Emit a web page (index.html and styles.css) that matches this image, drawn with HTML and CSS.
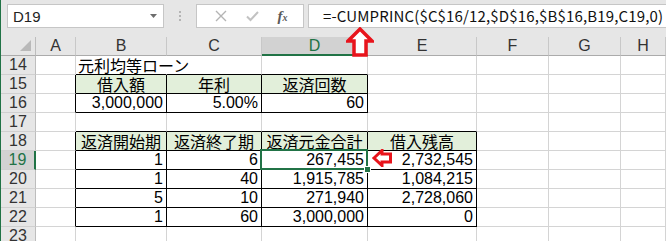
FILE: index.html
```html
<!DOCTYPE html>
<html lang="ja">

<head>
  <meta charset="utf-8">
  <link rel="stylesheet" href="styles.css">
</head>

<body>
  <div class="app">
    <div class="fbar">
      <div class="nameBox">
        <span>D19</span>
        <svg class="drop" width="7" height="4" viewBox="0 0 7 4"><path d="M0 0H7L3.5 4Z" fill="#6d6d6d"/></svg>
      </div>
      <div class="grip"><i></i><i></i><i></i></div>
      <div class="fBtns">
        <svg width="12" height="12" viewBox="0 0 12 12"><path d="M1 1L11 11M11 1L1 11" stroke="#b4b4b4" stroke-width="1.4" fill="none"/></svg>
        <svg width="13" height="12" viewBox="0 0 13 12"><path d="M1 6.5L4.5 10L12 2" stroke="#c2c2c2" stroke-width="2" fill="none"/></svg>
        <span class="fx">f<small>x</small></span>
      </div>
      <div class="formula">=-CUMPRINC($C$16/12,$D$16,$B$16,B19,C19,0)</div>
    </div>

    <div class="sheet">
      <div class="corner"><svg width="11" height="11" viewBox="0 0 11 11"><path d="M11 0V11H0Z" fill="#b9b9b9"/></svg></div>
      <div class="ch">A</div>
      <div class="ch">B</div>
      <div class="ch">C</div>
      <div class="ch on">D</div>
      <div class="ch">E</div>
      <div class="ch">F</div>
      <div class="ch">G</div>
      <div class="ch">H</div>

      <div class="rh">14</div>
      <div class="c"></div>
      <div class="c bb ovf">元利均等ローン</div>
      <div class="c bb"></div>
      <div class="c bb"></div>
      <div class="c"></div>
      <div class="c"></div>
      <div class="c"></div>
      <div class="c"></div>

      <div class="rh">15</div>
      <div class="c bl"></div>
      <div class="c hd">借入額</div>
      <div class="c hd">年利</div>
      <div class="c hd">返済回数</div>
      <div class="c"></div>
      <div class="c"></div>
      <div class="c"></div>
      <div class="c"></div>

      <div class="rh">16</div>
      <div class="c bl"></div>
      <div class="c bx num">3,000,000</div>
      <div class="c bx num">5.00%</div>
      <div class="c bx num">60</div>
      <div class="c"></div>
      <div class="c"></div>
      <div class="c"></div>
      <div class="c"></div>

      <div class="rh">17</div>
      <div class="c"></div>
      <div class="c bb"></div>
      <div class="c bb"></div>
      <div class="c bb"></div>
      <div class="c bb"></div>
      <div class="c"></div>
      <div class="c"></div>
      <div class="c"></div>

      <div class="rh">18</div>
      <div class="c bl"></div>
      <div class="c hd">返済開始期</div>
      <div class="c hd">返済終了期</div>
      <div class="c hd">返済元金合計</div>
      <div class="c hd">借入残高</div>
      <div class="c"></div>
      <div class="c"></div>
      <div class="c"></div>

      <div class="rh on">19</div>
      <div class="c bl"></div>
      <div class="c bx num">1</div>
      <div class="c bx num">6</div>
      <div class="c bx num active">267,455</div>
      <div class="c bx num">2,732,545</div>
      <div class="c"></div>
      <div class="c"></div>
      <div class="c"></div>

      <div class="rh">20</div>
      <div class="c bl"></div>
      <div class="c bx num">1</div>
      <div class="c bx num">40</div>
      <div class="c bx num">1,915,785</div>
      <div class="c bx num">1,084,215</div>
      <div class="c"></div>
      <div class="c"></div>
      <div class="c"></div>

      <div class="rh">21</div>
      <div class="c bl"></div>
      <div class="c bx num">5</div>
      <div class="c bx num">10</div>
      <div class="c bx num">271,940</div>
      <div class="c bx num">2,728,060</div>
      <div class="c"></div>
      <div class="c"></div>
      <div class="c"></div>

      <div class="rh">22</div>
      <div class="c bl"></div>
      <div class="c bx num">1</div>
      <div class="c bx num">60</div>
      <div class="c bx num">3,000,000</div>
      <div class="c bx num">0</div>
      <div class="c"></div>
      <div class="c"></div>
      <div class="c"></div>

      <div class="rh">23</div>
      <div class="c"></div>
      <div class="c"></div>
      <div class="c"></div>
      <div class="c"></div>
      <div class="c"></div>
      <div class="c"></div>
      <div class="c"></div>
      <div class="c"></div>
    </div>

    <!-- callout arrows drawn over the sheet -->
    <svg class="arrow upArrow" width="28" height="30" viewBox="0 0 28 30">
      <path d="M14 2L26 14H20V28H8V14H2Z" fill="#fff" stroke="#e8141c" stroke-width="3.5" stroke-linejoin="miter"/>
    </svg>
    <svg class="arrow leftArrow" width="20" height="18" viewBox="0 0 20 18">
      <path d="M2 9L10 1.5V5H18.5V13H10V16.5Z" fill="#fff" stroke="#e8141c" stroke-width="3" stroke-linejoin="miter"/>
    </svg>
  </div>
</body>

</html>
```

FILE: styles.css
```css
body {
  margin: 0;
  padding: 0;
  background: #fff;
  font-family: "Noto Sans CJK JP", "Noto Sans", sans-serif;
  overflow: hidden;
}

.app {
  position: relative;
  width: 666px;
  height: 241px;
  border-left: 1px solid #217346;
  box-sizing: border-box;
  overflow: hidden;
}

/* formula bar */
.fbar {
  display: flex;
  align-items: flex-start;
  height: 37px;
  padding: 4px 0 0 6px;
  box-sizing: border-box;
  background: #e6e6e6;
}

.nameBox {
  display: flex;
  flex-shrink: 0;
  align-items: center;
  justify-content: space-between;
  width: 157px;
  height: 24px;
  padding: 0 6px 0 5px;
  box-sizing: border-box;
  background: #fff;
  border: 1px solid #c6c6c6;
  font-family: "Liberation Sans", sans-serif;
  font-size: 15px;
  color: #222;
}

.grip {
  display: flex;
  flex-shrink: 0;
  flex-direction: column;
  align-items: center;
  gap: 2px;
  width: 32px;
  padding-top: 7px;
}

.grip i {
  width: 2px;
  height: 2px;
  background: #b4b4b4;
}

.fBtns {
  display: flex;
  flex-shrink: 0;
  align-items: center;
  justify-content: space-around;
  width: 108px;
  height: 24px;
  padding: 0 6px 0 8px;
  box-sizing: border-box;
  background: #fff;
  border: 1px solid #c6c6c6;
}

.fx {
  font-family: "Liberation Serif", serif;
  font-style: italic;
  font-weight: bold;
  font-size: 15px;
  color: #5a5a5a;
}

.fx small {
  font-size: 10px;
}

.formula {
  flex: 1;
  min-width: 0;
  height: 24px;
  margin: 0 -4px 0 4px;
  padding-left: 14px;
  box-sizing: border-box;
  background: #fff;
  border: 1px solid #c6c6c6;
  font-size: 15px;
  letter-spacing: 0.15px;
  line-height: 22px;
  color: #111;
  white-space: nowrap;
}

/* sheet grid */
.sheet {
  display: grid;
  grid-template-columns: 35px 40px 91px 95px 106px 109px 72px 72px 45px;
  grid-auto-rows: 19px;
  font-size: 16px;
  line-height: 18px;
}

.corner {
  display: flex;
  align-items: flex-end;
  justify-content: flex-end;
  padding: 0 4px 4px 0;
  background: #e6e6e6;
  border-right: 1px solid #bdbdbd;
  border-bottom: 1px solid #ababab;
}

.ch,
.rh,
.num {
  font-family: "Liberation Sans", sans-serif;
  font-size: 16px;
}

.ch {
  text-align: center;
  background: #e6e6e6;
  color: #333;
  border-right: 1px solid #c8c8c8;
  border-bottom: 1px solid #ababab;
  box-sizing: border-box;
}

.ch.on {
  background: #d2d2d2;
  color: #217346;
  border-bottom: 2px solid #217346;
}

.rh {
  text-align: center;
  background: #e6e6e6;
  color: #333;
  border-right: 1px solid #bdbdbd;
  border-bottom: 1px solid #d0d0d0;
  box-sizing: border-box;
}

.rh.on {
  background: #d2d2d2;
  color: #217346;
  border-right: 2px solid #217346;
}

.c {
  padding: 0 3px;
  border-right: 1px solid #d4d4d4;
  border-bottom: 1px solid #d4d4d4;
  box-sizing: border-box;
  white-space: nowrap;
  color: #000;
}

.ovf {
  overflow: visible;
  border-right-color: transparent;
  padding-left: 2px;
}

.bl {
  border-right-color: #000;
}

.bb {
  border-bottom-color: #000;
}

.bx,
.hd {
  border-right-color: #000;
  border-bottom-color: #000;
}

.hd {
  background: #e2efda;
  text-align: center;
  padding: 0;
}

.num {
  text-align: right;
}

.active {
  position: relative;
}

.active::before {
  content: "";
  position: absolute;
  left: -2px;
  top: -2px;
  right: -1px;
  bottom: -1px;
  border: 2px solid #217346;
}

.active::after {
  content: "";
  position: absolute;
  right: -4px;
  bottom: -4px;
  width: 5px;
  height: 5px;
  background: #217346;
  border: 1px solid #fff;
}

.arrow {
  position: absolute;
}

.upArrow {
  left: 345px;
  top: 27px;
}

.leftArrow {
  left: 371px;
  top: 149px;
}
```
